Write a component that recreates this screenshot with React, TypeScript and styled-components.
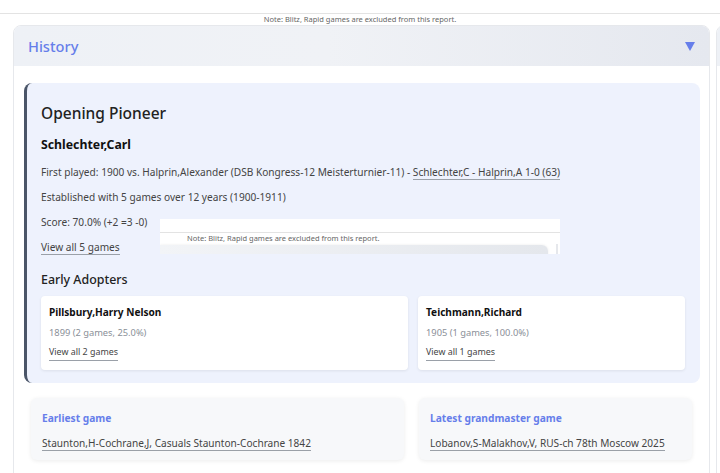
import React from 'react';
import styled, { createGlobalStyle } from 'styled-components';

const GlobalStyle = createGlobalStyle`
  html, body {
    margin: 0;
    padding: 0;
    background: #ffffff;
    font-family: 'Noto Sans', 'Open Sans', Arial, sans-serif;
    color: #333;
    overflow: hidden;
  }
`;

const Page = styled.div`
  width: 720px;
  height: 473px;
  overflow: hidden;
  position: relative;
`;

const TopBar = styled.div`
  height: 13px;
  border-bottom: 1px solid #e3e3e3;
`;

const Note = styled.div<{ $align?: string; $pad?: number }>`
  font-size: 7.5px;
  line-height: 11px;
  color: #666;
  text-align: ${({ $align }) => $align || 'center'};
  padding-left: ${({ $pad }) => $pad || 0}px;
  white-space: nowrap;
`;

const CardRow = styled.div`
  display: flex;
  gap: 6px;
  padding: 0 0 0 13px;
`;

const Card = styled.section`
  flex: 0 0 697px;
  height: 460px;
  border: 1px solid #e6e8ec;
  border-radius: 8px 8px 0 0;
  background: #fff;
  box-sizing: border-box;
  overflow: hidden;
`;

const CardHeader = styled.div`
  height: 40px;
  display: flex;
  align-items: center;
  justify-content: space-between;
  padding: 0 14px 0 14px;
  background: linear-gradient(90deg, #eef1f6 0%, #f0f2f6 45%, #e5e8ef 100%);
`;

const CardTitle = styled.h2`
  margin: 0;
  font-size: 14.6px;
  font-weight: 500;
  color: #667eea;
`;

const CardBody = styled.div`
  padding: 17px 9px 0 10px;
`;

const Pioneer = styled.div`
  position: relative;
  background: #eef2fd;
  border-left: 3px solid #4a5568;
  border-radius: 8px;
  padding: 17px 14px 13px 14px;
`;

const PioneerTitle = styled.h3`
  margin: 0 0 8px;
  font-size: 15.5px;
  font-weight: 500;
  color: #222;
  line-height: 26px;
`;

const PlayerName = styled.div`
  font-size: 12.3px;
  font-weight: 700;
  color: #111;
  line-height: 22px;
  margin-bottom: 8px;
`;

const Line = styled.p`
  margin: 0 0 8px;
  font-size: 10.15px;
  line-height: 17px;
  color: #444;
  white-space: nowrap;
`;

const Link = styled.a`
  color: #444;
  text-decoration: none;
  border-bottom: 1px solid #9aa0a8;
`;

const SectionTitle = styled.h4`
  margin: 14px 0 6px;
  font-size: 12.4px;
  font-weight: 500;
  color: #222;
  line-height: 20px;
`;

const AdopterGrid = styled.div`
  display: grid;
  grid-template-columns: 367px 267px;
  gap: 10px;
`;

const Adopter = styled.div`
  background: #fff;
  border-radius: 4px;
  box-shadow: 0 1px 3px rgba(0, 0, 0, 0.08);
  padding: 7px 8px 9px;
  display: flex;
  flex-direction: column;
  align-items: flex-start;
`;

const AdopterName = styled.div`
  font-size: 10.1px;
  font-weight: 700;
  color: #111;
  line-height: 18px;
  margin-bottom: 3px;
`;

const AdopterMeta = styled.div`
  font-size: 9.3px;
  color: #8a8f98;
  line-height: 18px;
  margin-bottom: 2px;
`;

const AdopterLink = styled(Link)`
  font-size: 8.9px;
  line-height: 16px;
`;

const Embed = styled.div`
  position: absolute;
  left: 133px;
  top: 136px;
  width: 400px;
  height: 35px;
  background: #fff;
  overflow: hidden;
`;

const EmbedTop = styled.div`
  height: 13px;
  border-bottom: 1px solid #e3e3e3;
`;

const EmbedBar = styled.div`
  margin-top: 1px;
  width: 388px;
  height: 10px;
  border-radius: 0 6px 0 0;
  background: linear-gradient(90deg, #f2f4f7, #e4e7ec);
  box-shadow: 0 0 3px rgba(0, 0, 0, 0.08);
`;

const EmbedEdge = styled.div`
  position: absolute;
  right: 2px;
  top: 25px;
  width: 2px;
  height: 10px;
  background: #e6e8ec;
`;

const Highlights = styled.div`
  display: grid;
  grid-template-columns: 373px 273px;
  gap: 15px;
  padding: 15px 0 0 7px;
`;

const Highlight = styled.div`
  background: #f7f8fa;
  border-radius: 6px;
  box-shadow: 0 1px 4px rgba(0, 0, 0, 0.08);
  padding: 11px 11px 8px;
`;

const HighlightTitle = styled.div`
  font-size: 10.2px;
  font-weight: 700;
  color: #667eea;
  line-height: 18px;
  margin-bottom: 3px;
`;

const HighlightLink = styled(Link)`
  font-size: 10.1px;
  line-height: 18px;
`;

const Arrow = () => (
  <svg width="10" height="10" viewBox="0 0 10 10">
    <polygon points="0,1 10,1 5,10" fill="#667eea" />
  </svg>
);

const adopters = [
  { name: 'Pillsbury,Harry Nelson', meta: '1899 (2 games, 25.0%)', link: 'View all 2 games' },
  { name: 'Teichmann,Richard', meta: '1905 (1 games, 100.0%)', link: 'View all 1 games' },
];

const highlights = [
  { title: 'Earliest game', link: 'Staunton,H-Cochrane,J, Casuals Staunton-Cochrane 1842' },
  { title: 'Latest grandmaster game', link: 'Lobanov,S-Malakhov,V, RUS-ch 78th Moscow 2025' },
];

const App: React.FC = () => (
  <Page>
    <GlobalStyle />
    <TopBar />
    <Note>Note: Blitz, Rapid games are excluded from this report.</Note>
    <CardRow>
      <Card>
        <CardHeader>
          <CardTitle>History</CardTitle>
          <Arrow />
        </CardHeader>
        <CardBody>
          <Pioneer>
            <PioneerTitle>Opening Pioneer</PioneerTitle>
            <PlayerName>Schlechter,Carl</PlayerName>
            <Line>
              First played: 1900 vs. Halprin,Alexander (DSB Kongress-12 Meisterturnier-11) -{' '}
              <Link href="#">Schlechter,C - Halprin,A 1-0 (63)</Link>
            </Line>
            <Line>Established with 5 games over 12 years (1900-1911)</Line>
            <Line>Score: 70.0% (+2 =3 -0)</Line>
            <Line>
              <Link href="#">View all 5 games</Link>
            </Line>
            <SectionTitle>Early Adopters</SectionTitle>
            <AdopterGrid>
              {adopters.map((a) => (
                <Adopter key={a.name}>
                  <AdopterName>{a.name}</AdopterName>
                  <AdopterMeta>{a.meta}</AdopterMeta>
                  <AdopterLink href="#">{a.link}</AdopterLink>
                </Adopter>
              ))}
            </AdopterGrid>
            <Embed>
              <EmbedTop />
              <Note $align="left" $pad={27}>
                Note: Blitz, Rapid games are excluded from this report.
              </Note>
              <EmbedBar />
              <EmbedEdge />
            </Embed>
          </Pioneer>
          <Highlights>
            {highlights.map((h) => (
              <Highlight key={h.title}>
                <HighlightTitle>{h.title}</HighlightTitle>
                <HighlightLink href="#">{h.link}</HighlightLink>
              </Highlight>
            ))}
          </Highlights>
        </CardBody>
      </Card>
      <Card>
        <CardHeader />
      </Card>
    </CardRow>
  </Page>
);

export default App;
